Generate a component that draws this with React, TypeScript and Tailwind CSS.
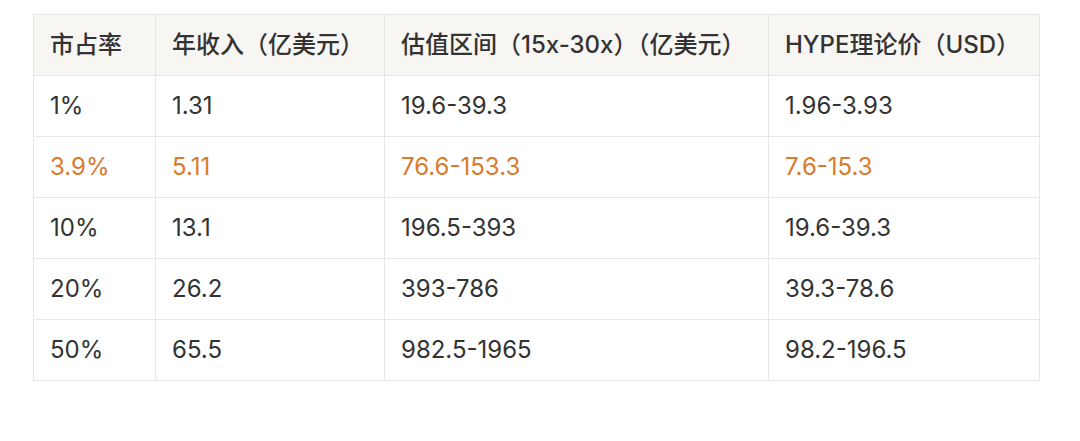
import React from "react";

const headers = ["市占率", "年收入（亿美元）", "估值区间（15x-30x）（亿美元）", "HYPE理论价（USD）"];
const rows: { cells: string[]; hl?: boolean }[] = [
  { cells: ["1%", "1.31", "19.6-39.3", "1.96-3.93"] },
  { cells: ["3.9%", "5.11", "76.6-153.3", "7.6-15.3"], hl: true },
  { cells: ["10%", "13.1", "196.5-393", "19.6-39.3"] },
  { cells: ["20%", "26.2", "393-786", "39.3-78.6"] },
  { cells: ["50%", "65.5", "982.5-1965", "98.2-196.5"] },
];

const widths = ["w-[122px]", "w-[229px]", "w-[384px]", "w-[271px]"];

export default function App() {
  return (
    <div
      className="w-[1080px] h-[441px] bg-white pt-[14px] pl-[33px]"
      style={{ fontFamily: 'Inter, "Noto Sans CJK SC", sans-serif' }}
    >
      <table className="border-collapse w-[1007px] table-fixed text-[24px] text-[#333333]">
        <colgroup>
          {widths.map((w, i) => (
            <col key={i} className={w} />
          ))}
        </colgroup>
        <thead>
          <tr className="bg-[#f7f6f3] h-[61px]">
            {headers.map((h, i) => (
              <th
                key={i}
                className="border border-[#e6e6e6] text-left font-medium px-[16px] whitespace-nowrap"
              >
                {h}
              </th>
            ))}
          </tr>
        </thead>
        <tbody>
          {rows.map((r, ri) => (
            <tr key={ri} className="h-[61px]">
              {r.cells.map((c, ci) => (
                <td
                  key={ci}
                  className={
                    "border border-[#e6e6e6] px-[16px] whitespace-nowrap " +
                    (r.hl ? "text-[#d97b2c]" : "")
                  }
                >
                  {c}
                </td>
              ))}
            </tr>
          ))}
        </tbody>
      </table>
    </div>
  );
}
